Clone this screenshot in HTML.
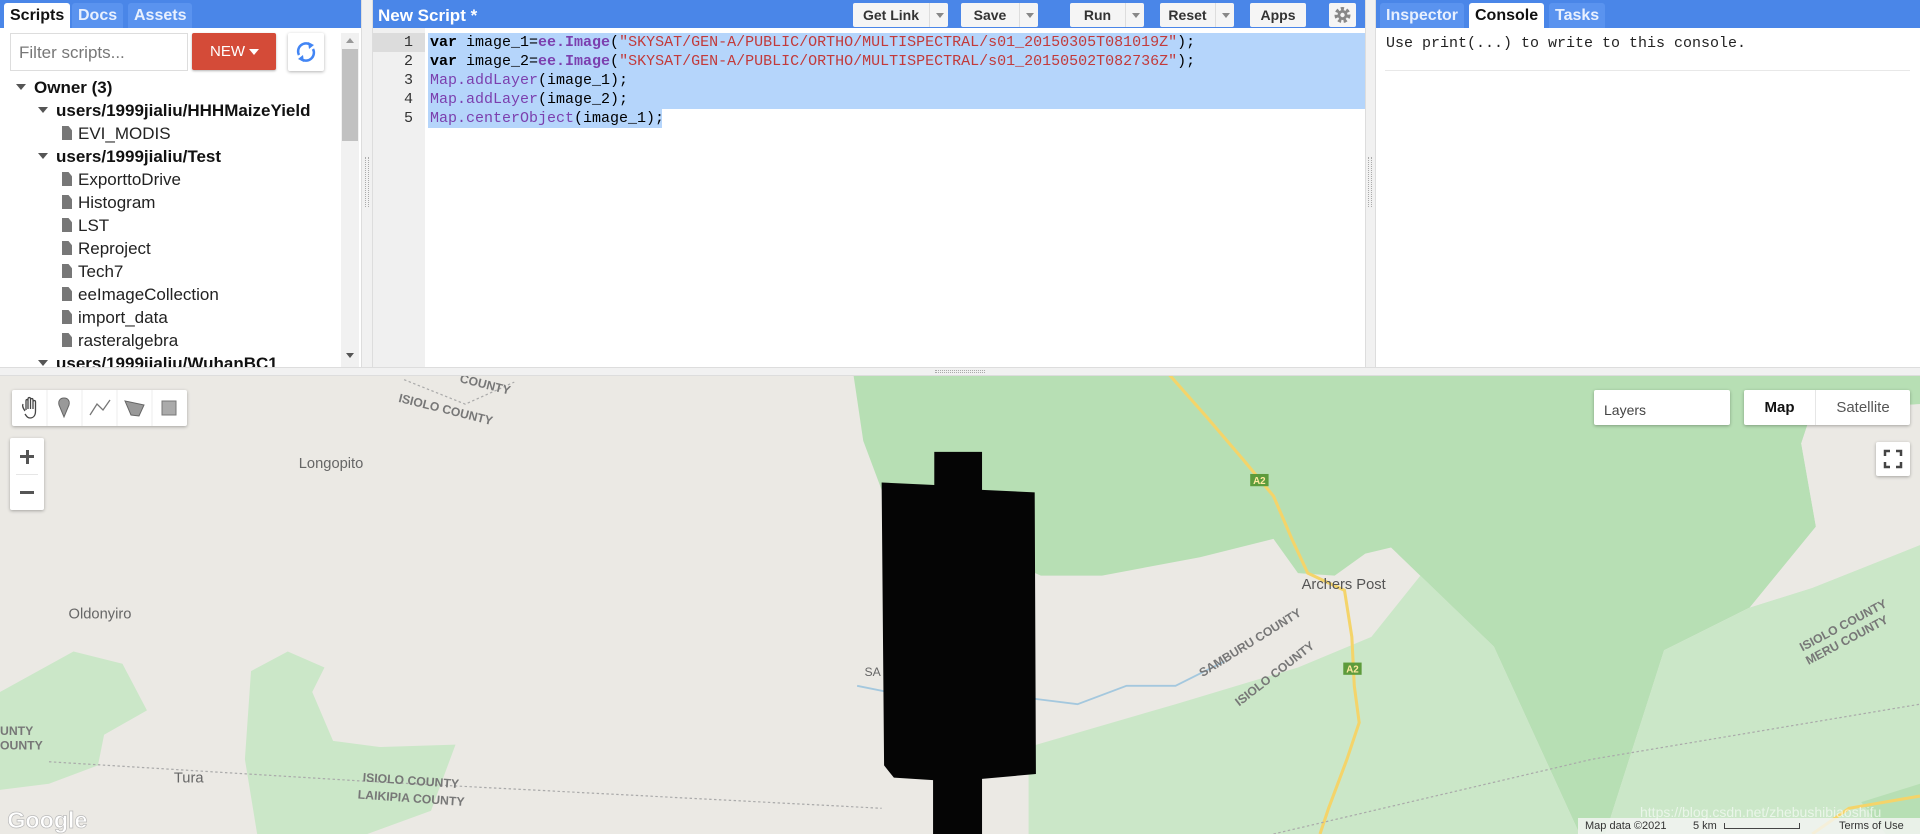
<!DOCTYPE html>
<html><head><meta charset="utf-8"><style>
*{box-sizing:border-box;margin:0;padding:0}
body{width:1920px;height:834px;overflow:hidden;position:relative;font-family:"Liberation Sans",Arial,sans-serif;background:#fff}
.abs{position:absolute}
.hdr{background:#4a86e8;height:28px;top:0}
.tab{position:absolute;top:3px;height:25px;font-weight:bold;font-size:16px;line-height:25px;padding:0 6px;color:#e8f0fe;background:#5a93ef;border-radius:3px 3px 0 0}
.tab.on{background:#fff;color:#111}
.tree div{position:absolute;font-size:17px;color:#222;white-space:nowrap;line-height:20px}
.tree .b{font-weight:bold;color:#111}
.tri{display:inline-block;width:0;height:0;border-left:5px solid transparent;border-right:5px solid transparent;border-top:6px solid #555;margin-right:8px;vertical-align:middle;position:relative;top:-2px}
.fi{display:inline-block;width:10px;height:14px;background:#777;margin-right:6px;vertical-align:-1px;clip-path:polygon(0 0,65% 0,100% 30%,100% 100%,0 100%)}
.btn{position:absolute;top:3px;height:24px;background:#f5f5f5;border-radius:2px;font-size:14px;font-weight:bold;color:#333;line-height:24px}
.btn span.l{position:absolute;left:0;text-align:center}
.btn .dd{position:absolute;right:0;top:0;width:19px;height:24px;border-left:1px solid #ddd}
.btn .dd:after{content:"";position:absolute;left:6px;top:10px;border-left:4px solid transparent;border-right:4px solid transparent;border-top:5px solid #888}
.code div{position:absolute;font-family:"Liberation Mono",monospace;font-size:15px;line-height:19px;white-space:pre;color:#000}
.ln{position:absolute;left:373px;width:40px;text-align:right;font-family:"Liberation Mono",monospace;font-size:15px;line-height:19px;color:#333}
.k{font-weight:bold}.p{color:#7b3fae}.s{color:#c23a3a}.pb{color:#7b3fae;font-weight:bold}
.ctl{position:absolute;background:#fff;box-shadow:0 1px 3px rgba(0,0,0,.3);border-radius:2px}
</style></head><body>

<!-- MAP -->
<svg class="abs" style="left:0;top:376px" width="1920" height="458" viewBox="0 307 1568 374" preserveAspectRatio="none">
<rect x="0" y="300" width="1568" height="400" fill="#ebe9e4"/>
<path d="M697,306 L1568,306 L1568,330 L1480,335 L1471,362 L1483,430 L1429,496 L1359,531 L1311,681 L1290,681 L1220,528 L1136,447 L1115,452 L1090,470 L1060,468 L1040,440 L980,455 L900,470 L850,470 L760,430 L720,400 L705,360 Z" fill="#b7dfb4"/>
<path d="M1359,531 L1429,496 L1480,480 L1568,445 L1568,681 L1311,681 Z" fill="#cbe7c8"/>
<path d="M840,610 L960,575 L1060,545 L1120,520 L1160,470 L1220,528 L1290,681 L840,681 Z" fill="#cbe7c8"/>
<path d="M1480,335 L1568,330 L1568,445 L1480,480 L1429,496 L1483,430 L1471,362 Z" fill="#ebe9e4"/>
<path d="M0,565 L60,532 L100,542 L120,580 L85,600 L80,625 L40,640 L0,645 Z" fill="#cbe7c8"/>
<path d="M205,548 L235,532 L265,545 L255,565 L272,605 L310,610 L372,608 L352,662 L300,681 L210,681 L200,620 Z" fill="#cbe7c8"/>
<path d="M1520,655 L1568,640 L1568,681 L1540,681 Z" fill="#b7dfb4"/>
<path d="M955,306 L985,340 L1015,375 L1040,405 L1055,440 L1068,468 L1098,482 L1104,520 L1106,560 L1110,590 L1100,620 L1085,660 L1078,681" fill="none" stroke="#f4d46a" stroke-width="2.5"/>
<path d="M1480,681 L1510,660 L1568,650" fill="none" stroke="#f4d46a" stroke-width="2.5"/>
<path d="M40,622 L300,638 L720,660" fill="none" stroke="#aaa" stroke-width="1" stroke-dasharray="2,2"/>
<path d="M1040,681 L1300,620 L1568,575" fill="none" stroke="#aaa" stroke-width="1" stroke-dasharray="2,2"/>
<path d="M330,310 L380,330 L420,312" fill="none" stroke="#aaa" stroke-width="1" stroke-dasharray="2,2"/>
<path d="M700,560 L760,572 L800,565 L880,575 L920,560 L960,560 L1000,540" fill="none" stroke="#a4c8de" stroke-width="1.5"/>
<path d="M720,394 L763,396 L763,369 L802,369 L802,400 L845,402 L846,632 L802,636 L802,681 L762,681 L762,637 L730,635 L722,625 Z" fill="#050505"/>
<rect x="1021" y="387" width="15" height="10" fill="#5d9b3c"/><text x="1028.5" y="395" font-size="8" fill="#ffe9a0" text-anchor="middle" font-weight="bold" font-family="Liberation Sans">A2</text>
<rect x="1097" y="541" width="15" height="10" fill="#5d9b3c"/><text x="1104.5" y="549" font-size="8" fill="#ffe9a0" text-anchor="middle" font-weight="bold" font-family="Liberation Sans">A2</text>
<g font-family="Liberation Sans" fill="#666" font-size="12">
<text x="244" y="382">Longopito</text>
<text x="56" y="505">Oldonyiro</text>
<text x="142" y="639">Tura</text>
<text x="1063" y="481" fill="#555">Archers Post</text>
<text x="706" y="552" font-size="10">SA</text>
</g>
<g font-family="Liberation Sans" fill="#777" font-size="10" font-weight="bold">
<text x="325" y="328" transform="rotate(14 325 328)">ISIOLO COUNTY</text>
<text x="375" y="312" transform="rotate(14 375 312)">COUNTY</text>
<text x="296" y="638" transform="rotate(4 296 638)">ISIOLO COUNTY</text>
<text x="292" y="652" transform="rotate(4 292 652)">LAIKIPIA COUNTY</text>
<text x="0" y="600">UNTY</text><text x="0" y="612">OUNTY</text>
<text x="982" y="553" transform="rotate(-32 982 553)">SAMBURU COUNTY</text>
<text x="1012" y="577" transform="rotate(-38 1012 577)">ISIOLO COUNTY</text>
<text x="1472" y="532" transform="rotate(-28 1472 532)">ISIOLO COUNTY</text>
<text x="1477" y="543" transform="rotate(-28 1477 543)">MERU COUNTY</text>
</g>
<text x="6" y="676" font-family="Liberation Sans" font-size="19" fill="#fff" stroke="#bbb" stroke-width=".6" font-weight="bold">Google</text>
</svg>

<!-- map controls -->
<div class="ctl" style="left:12px;top:390px;width:175px;height:36px">
<svg width="175" height="36" viewBox="0 0 175 36">
<g stroke="#eee"><line x1="35" y1="0" x2="35" y2="36"/><line x1="70" y1="0" x2="70" y2="36"/><line x1="105" y1="0" x2="105" y2="36"/><line x1="140" y1="0" x2="140" y2="36"/></g>
<g fill="none" stroke="#444" stroke-width="1.3">
<path d="M13,21 C11,18 10,16 11,14 M14,20 L14,11 C14,9 16,9 16,11 L16,19 M16,11 L16,9 C16,7 18.5,7 18.5,9 L18.5,19 M18.5,10 C18.5,8 21,8 21,10 L21,19 M21,12 C21,10 23.5,10 23.5,12 L23.5,21 C23.5,26 21,28 18,28 C16,28 15,27 13,24"/>
<path d="M78,25 L85,14 L91,20 L98,10" stroke="#777"/></g>
<path d="M52,8 C48,8 46,11 47,15 L52,27 L57,15 C58,11 56,8 52,8Z" fill="#999" stroke="#666"/>
<path d="M113,11 L132,15 L127,26 L119,25 Z" fill="#999" stroke="#666"/>
<rect x="150" y="11" width="14" height="14" fill="#aaa" stroke="#777"/>
</svg></div>
<div class="ctl" style="left:10px;top:438px;width:34px;height:72px">
<div class="abs" style="left:10px;top:17px;width:14px;height:3px;background:#555"></div>
<div class="abs" style="left:15.5px;top:11.5px;width:3px;height:14px;background:#555"></div>
<div class="abs" style="left:6px;top:36px;width:22px;height:1px;background:#e6e6e6"></div>
<div class="abs" style="left:10px;top:53px;width:14px;height:3px;background:#555"></div>
</div>
<div class="ctl" style="left:1594px;top:390px;width:136px;height:35px;font-size:14px;color:#444;padding:12px 0 0 10px">Layers</div>
<div class="ctl" style="left:1744px;top:390px;width:166px;height:35px;font-size:15px">
<div class="abs" style="left:0;top:0;width:71px;height:35px;text-align:center;line-height:35px;color:#111;font-weight:bold">Map</div>
<div class="abs" style="left:71px;top:0;width:1px;height:35px;background:#e6e6e6"></div>
<div class="abs" style="left:72px;top:0;width:94px;height:35px;text-align:center;line-height:35px;color:#555">Satellite</div>
</div>
<div class="ctl" style="left:1876px;top:442px;width:34px;height:34px">
<svg width="34" height="34"><path d="M9,14 V9 H14 M20,9 H25 V14 M25,20 V25 H20 M14,25 H9 V20" fill="none" stroke="#444" stroke-width="2.5"/></svg></div>
<div class="abs" style="left:1578px;top:818px;width:342px;height:16px;background:rgba(245,245,245,.8);font-size:11px;color:#333;line-height:16px;white-space:nowrap">
<span style="position:absolute;left:7px">Map data ©2021</span><span style="position:absolute;left:115px">5 km</span>
<span style="position:absolute;left:146px;top:5px;width:76px;height:6px;border:1.5px solid #444;border-top:none"></span>
<span style="position:absolute;left:261px">Terms of Use</span></div>
<div class="abs" style="left:1640px;top:804px;font-size:14px;color:rgba(255,255,255,.6);white-space:nowrap">https://blog.csdn.net/zhebushibiaoshifu</div>

<!-- TOP AREA -->
<div class="abs" style="left:0;top:0;width:1920px;height:376px;background:#fff"></div>
<div class="abs" style="left:0;top:367px;width:1920px;height:9px;background:#f1f1f1;border-top:1px solid #ddd;border-bottom:1px solid #ddd"></div>
<div class="abs" style="left:935px;top:370px;width:50px;height:3px;border-top:1px dotted #aaa;border-bottom:1px dotted #aaa"></div>

<!-- Left panel -->
<div class="abs hdr" style="left:0;width:361px"></div>
<div class="tab on" style="left:4px">Scripts</div>
<div class="tab" style="left:72px">Docs</div>
<div class="tab" style="left:128px">Assets</div>
<div class="abs" style="left:10px;top:33px;width:178px;height:38px;border:1px solid #ddd;font-size:17px;color:#777;padding:9px 0 0 8px">Filter scripts...</div>
<div class="abs" style="left:192px;top:33px;width:84px;height:37px;background:#d44b38;border-radius:2px;box-shadow:0 1px 2px rgba(0,0,0,.3);color:#fff;font-size:15px;line-height:37px;padding-left:18px">NEW <span style="display:inline-block;border-left:5px solid transparent;border-right:5px solid transparent;border-top:6px solid #fff;vertical-align:middle"></span></div>
<div class="abs" style="left:288px;top:33px;width:36px;height:38px;background:#fff;border-radius:2px;box-shadow:0 1px 3px rgba(0,0,0,.3)">
<svg width="36" height="38"><g fill="none" stroke="#4285f4" stroke-width="2.5"><path d="M11,22 A8,8 0 0 1 23,12"/><path d="M25,16 A8,8 0 0 1 13,26"/></g><path d="M20,9 L26,12 L21,16Z M16,29 L10,26 L15,22Z" fill="#4285f4"/></svg></div>
<div class="abs" style="left:341px;top:33px;width:18px;height:334px;background:#f1f1f1"></div>
<div class="abs" style="left:342px;top:49px;width:16px;height:92px;background:#c1c1c1"></div>
<div class="abs" style="left:346px;top:38px;border-left:4px solid transparent;border-right:4px solid transparent;border-bottom:5px solid #999"></div>
<div class="abs" style="left:346px;top:353px;border-left:4px solid transparent;border-right:4px solid transparent;border-top:5px solid #555"></div>
<div class="tree">
<div style="left:16px;top:78px"><span class="tri"></span><span class="b" style="font-weight:bold">Owner (3)</span></div>
<div class="b" style="left:38px;top:101px"><span class="tri"></span>users/1999jialiu/HHHMaizeYield</div>
<div style="left:62px;top:124px"><span class="fi"></span>EVI_MODIS</div>
<div class="b" style="left:38px;top:147px"><span class="tri"></span>users/1999jialiu/Test</div>
<div style="left:62px;top:170px"><span class="fi"></span>ExporttoDrive</div>
<div style="left:62px;top:193px"><span class="fi"></span>Histogram</div>
<div style="left:62px;top:216px"><span class="fi"></span>LST</div>
<div style="left:62px;top:239px"><span class="fi"></span>Reproject</div>
<div style="left:62px;top:262px"><span class="fi"></span>Tech7</div>
<div style="left:62px;top:285px"><span class="fi"></span>eeImageCollection</div>
<div style="left:62px;top:308px"><span class="fi"></span>import_data</div>
<div style="left:62px;top:331px"><span class="fi"></span>rasteralgebra</div>
<div class="b" style="left:38px;top:354px;height:13px;overflow:hidden"><span class="tri"></span>users/1999jialiu/WuhanBC1</div>
</div>

<div class="abs" style="left:361px;top:0;width:12px;height:367px;background:#f1f1f1;border-left:1px solid #ddd;border-right:1px solid #ddd"></div>
<div class="abs" style="left:365px;top:157px;width:4px;height:50px;border-left:1px dotted #aaa;border-right:1px dotted #aaa"></div>
<div class="abs" style="left:1365px;top:0;width:11px;height:367px;background:#f1f1f1;border-left:1px solid #ddd;border-right:1px solid #ddd"></div>
<div class="abs" style="left:1368px;top:157px;width:4px;height:50px;border-left:1px dotted #aaa;border-right:1px dotted #aaa"></div>

<!-- Code panel -->
<div class="abs hdr" style="left:373px;width:992px"></div>
<div class="abs" style="left:378px;top:3px;font-size:17px;font-weight:bold;color:#fff;line-height:26px">New Script *</div>
<div class="btn" style="left:853px;width:95px"><span class="l" style="width:76px">Get Link</span><span class="dd"></span></div>
<div class="btn" style="left:961px;width:77px"><span class="l" style="width:58px">Save</span><span class="dd"></span></div>
<div class="btn" style="left:1070px;width:74px"><span class="l" style="width:55px">Run</span><span class="dd"></span></div>
<div class="btn" style="left:1160px;width:74px"><span class="l" style="width:55px">Reset</span><span class="dd"></span></div>
<div class="btn" style="left:1250px;width:56px"><span class="l" style="width:56px">Apps</span></div>
<div class="btn" style="left:1329px;width:27px;background:#f5f5f5"><svg width="27" height="24"><circle cx="13.5" cy="12" r="6" fill="none" stroke="#888" stroke-width="4" stroke-dasharray="3,2.3"/><circle cx="13.5" cy="12" r="5" fill="#888"/><circle cx="13.5" cy="12" r="2.2" fill="#f5f5f5"/></svg></div>
<div class="abs" style="left:373px;top:28px;width:52px;height:339px;background:#f0f0f0"></div>
<div class="abs" style="left:373px;top:33px;width:52px;height:19px;background:#dcdcdc"></div>
<div class="abs" style="left:428px;top:33px;width:937px;height:76px;background:#b5d5fb"></div>
<div class="abs" style="left:428px;top:109px;width:234px;height:19px;background:#b5d5fb"></div>
<div class="ln" style="top:33px">1</div><div class="ln" style="top:52px">2</div><div class="ln" style="top:71px">3</div><div class="ln" style="top:90px">4</div><div class="ln" style="top:109px">5</div>
<div class="code">
<div style="left:430px;top:33px"><span class="k">var</span> image_1=<span class="pb">ee.Image</span>(<span class="s">"SKYSAT/GEN-A/PUBLIC/ORTHO/MULTISPECTRAL/s01_20150305T081019Z"</span>);</div>
<div style="left:430px;top:52px"><span class="k">var</span> image_2=<span class="pb">ee.Image</span>(<span class="s">"SKYSAT/GEN-A/PUBLIC/ORTHO/MULTISPECTRAL/s01_20150502T082736Z"</span>);</div>
<div style="left:430px;top:71px"><span class="p">Map.addLayer</span>(image_1);</div>
<div style="left:430px;top:90px"><span class="p">Map.addLayer</span>(image_2);</div>
<div style="left:430px;top:109px"><span class="p">Map.centerObject</span>(image_1);</div>
</div>

<!-- Right panel -->
<div class="abs hdr" style="left:1376px;width:544px"></div>
<div class="tab" style="left:1380px">Inspector</div>
<div class="tab on" style="left:1469px">Console</div>
<div class="tab" style="left:1549px">Tasks</div>
<div class="abs" style="left:1386px;top:34px;font-family:'Liberation Mono',monospace;font-size:15px;line-height:19px;color:#222">Use print(...) to write to this console.</div>
<div class="abs" style="left:1385px;top:70px;width:525px;height:1px;background:#e8e8e8"></div>
</body></html>
